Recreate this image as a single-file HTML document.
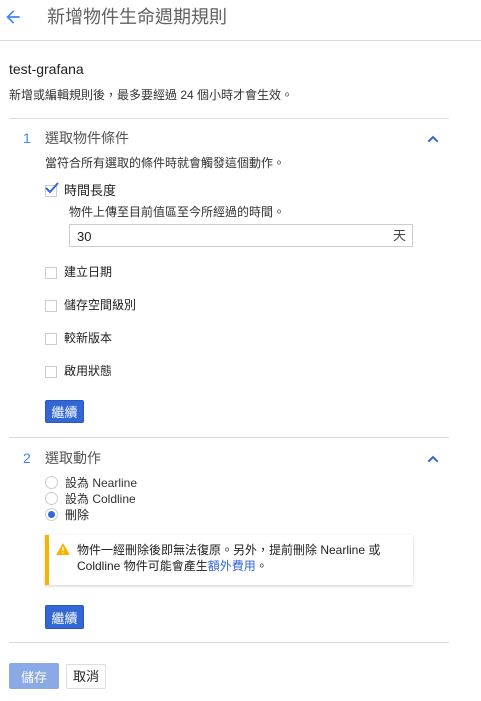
<!DOCTYPE html>
<html><head><meta charset="utf-8"><style>
*{margin:0;padding:0;box-sizing:border-box}
body{width:481px;height:701px;background:#fff;font-family:"Liberation Sans","Noto Sans CJK TC",sans-serif;color:#212121;position:relative;overflow:hidden}
.a{position:absolute;white-space:nowrap;line-height:1}
.hr{position:absolute;height:1px;background:#dadada}
.cb{position:absolute;width:12px;height:12px;border:1px solid #ccc;background:#fff}
.rd{position:absolute;width:13px;height:13px;border:1px solid #ccc;border-radius:50%;background:#fff}
.btn{position:absolute;background:#3367d6;color:#fff;font-size:13px;border-radius:2px;display:flex;align-items:center;justify-content:center;border:1px solid #2a56c6}
</style></head><body>
<svg class="a" style="left:3px;top:7px" width="20" height="20" viewBox="0 0 24 24"><path d="M20 11H7.8l5.6-5.6L12 4l-8 8 8 8 1.4-1.4L7.8 13H20z" fill="#4285f4"/></svg>
<div class="a" style="left:47px;top:8px;font-size:18px;color:#616161">新增物件生命週期規則</div>
<div class="hr" style="left:0;top:40px;width:481px"></div>
<div class="a" style="left:9px;top:62px;font-size:14px">test-grafana</div>
<div class="a" style="left:9px;top:89px;font-size:12px;color:#333">新增或編輯規則後，最多要經過 24 個小時才會生效。</div>
<div class="hr" style="left:9px;top:118px;width:440px"></div>
<div class="a" style="left:23px;top:131px;font-size:14px;color:#4285f4">1</div>
<div class="a" style="left:45px;top:131px;font-size:14px;color:#555">選取物件條件</div>
<svg class="a" style="left:425px;top:131px" width="16" height="16" viewBox="0 0 24 24"><path d="M5 16l7-7 7 7" stroke="#3367d6" stroke-width="3" fill="none"/></svg>
<div class="a" style="left:45px;top:157px;font-size:12px;color:#333">當符合所有選取的條件時就會觸發這個動作。</div>
<div class="cb" style="left:45px;top:185px;border-color:#ccc"></div>
<svg class="a" style="left:44px;top:181px" width="16" height="14" viewBox="0 0 16 14"><path d="M2 7l4 4 8-9" stroke="#3367d6" stroke-width="2" fill="none"/></svg>
<div class="a" style="left:64px;top:184px;font-size:13px">時間長度</div>
<div class="a" style="left:69px;top:206px;font-size:12px;color:#333">物件上傳至目前值區至今所經過的時間。</div>
<div class="a" style="left:69px;top:224px;width:344px;height:23px;border:1px solid #ccc"></div>
<div class="a" style="left:77px;top:230px;font-size:13px">30</div>
<div class="a" style="left:393px;top:229px;font-size:13px;color:#444">天</div>
<div class="cb" style="left:45px;top:267px"></div><div class="a" style="left:64px;top:266px;font-size:12px">建立日期</div>
<div class="cb" style="left:45px;top:300px"></div><div class="a" style="left:64px;top:299px;font-size:12px">儲存空間級別</div>
<div class="cb" style="left:45px;top:333px"></div><div class="a" style="left:64px;top:332px;font-size:12px">較新版本</div>
<div class="cb" style="left:45px;top:366px"></div><div class="a" style="left:64px;top:365px;font-size:12px">啟用狀態</div>
<div class="btn" style="left:45px;top:400px;width:39px;height:23px">繼續</div>
<div class="hr" style="left:9px;top:437px;width:440px"></div>
<div class="a" style="left:23px;top:451px;font-size:14px;color:#4285f4">2</div>
<div class="a" style="left:45px;top:451px;font-size:14px;color:#555">選取動作</div>
<svg class="a" style="left:425px;top:451px" width="16" height="16" viewBox="0 0 24 24"><path d="M5 16l7-7 7 7" stroke="#3367d6" stroke-width="3" fill="none"/></svg>
<div class="rd" style="left:45px;top:476px"></div><div class="a" style="left:65px;top:477px;font-size:12px;color:#333">設為 Nearline</div>
<div class="rd" style="left:45px;top:492px"></div><div class="a" style="left:65px;top:493px;font-size:12px;color:#333">設為 Coldline</div>
<div class="rd" style="left:45px;top:508px"></div><div class="a" style="left:48px;top:511px;width:7px;height:7px;border-radius:50%;background:#3367d6"></div>
<div class="a" style="left:65px;top:509px;font-size:12px">刪除</div>
<div class="a" style="left:45px;top:535px;width:368px;height:50px;border-left:4px solid #f4b400;box-shadow:0 1px 3px rgba(0,0,0,.2);background:#fff"></div>
<svg class="a" style="left:56px;top:543px" width="14" height="12" viewBox="0 0 24 21"><path d="M12 0L24 21H0z" fill="#f4b400"/><rect x="11" y="7" width="2" height="7" fill="#fff"/><rect x="11" y="16" width="2" height="2" fill="#fff"/></svg>
<div class="a" style="left:77px;top:544px;font-size:12px;color:#222">物件一經刪除後即無法復原。另外，提前刪除 Nearline 或</div>
<div class="a" style="left:77px;top:560px;font-size:12px;color:#222">Coldline 物件可能會產生<span style="color:#3367d6">額外費用</span>。</div>
<div class="btn" style="left:45px;top:605px;width:39px;height:24px">繼續</div>
<div class="hr" style="left:9px;top:642px;width:440px"></div>
<div class="btn" style="left:9px;top:663px;width:50px;height:26px;background:#8aa9e6;border-color:#8aa9e6">儲存</div>
<div class="a" style="left:66px;top:664px;width:40px;height:25px;border:1px solid #ddd;border-radius:2px;font-size:13px;display:flex;align-items:center;justify-content:center">取消</div>
</body></html>
